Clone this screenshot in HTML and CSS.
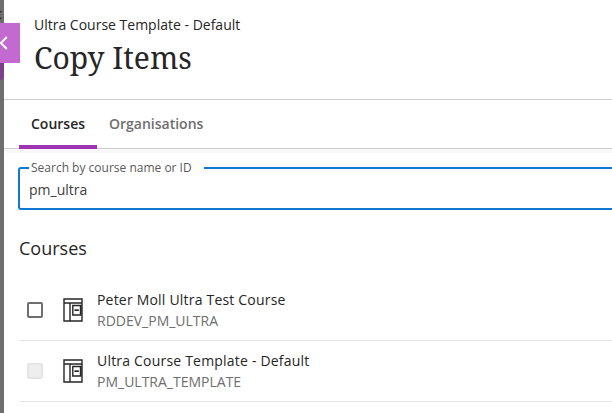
FILE: index.html
```html
<!DOCTYPE html>
<html lang="en">
<head>
<meta charset="utf-8">
<title>Copy Items</title>
<link rel="stylesheet" href="styles.css">
</head>
<body>
<aside class="backdrop">
  <span class="backdrop-letter">c</span>
  <span class="backdrop-accent"></span>
</aside>
<button class="close-tab" aria-label="Close">
  <svg width="8" height="14" viewBox="0 0 8 14"><path d="M6.800 1 L0.800 7 L6.800 13" fill="none" stroke="#fff" stroke-width="2"/></svg>
</button>
<main class="panel">
  <header class="head">
    <div class="crumb">Ultra Course Template - Default</div>
    <h1 class="title">Copy Items</h1>
  </header>
  <nav class="tabs">
    <a class="tab active">Courses</a>
    <a class="tab">Organisations</a>
  </nav>
  <section class="content">
    <fieldset class="search">
      <legend class="search-label">Search by course name or ID</legend>
      <div class="search-value">pm_ultra</div>
    </fieldset>
    <h2 class="section-title">Courses</h2>
    <ul class="list">
      <li class="row">
        <span class="check"></span>
        <svg class="icon" width="20" height="24" viewBox="0 0 20 24"><path d="M1 1 H19 V23 H1 Z M1 5 H19 M7 5 V23 M9.800 7.500 H17.500 V17 H9.800 Z" fill="none" stroke="#262626" stroke-width="1.400"/><path d="M11.500 11.300 H15.800 V13 H11.500 Z" fill="#262626"/></svg>
        <div class="info">
          <div class="name">Peter Moll Ultra Test Course</div>
          <div class="code">RDDEV_PM_ULTRA</div>
        </div>
      </li>
      <li class="row">
        <span class="check disabled"></span>
        <svg class="icon" width="20" height="24" viewBox="0 0 20 24"><path d="M1 1 H19 V23 H1 Z M1 5 H19 M7 5 V23 M9.800 7.500 H17.500 V17 H9.800 Z" fill="none" stroke="#262626" stroke-width="1.400"/><path d="M11.500 11.300 H15.800 V13 H11.500 Z" fill="#262626"/></svg>
        <div class="info">
          <div class="name">Ultra Course Template - Default</div>
          <div class="code">PM_ULTRA_TEMPLATE</div>
        </div>
      </li>
    </ul>
  </section>
</main>
</body>
</html>
```
FILE: styles.css
```css
* { box-sizing: border-box; }
html, body { margin: 0; height: 100%; }
body {
  width: 612px;
  height: 413px;
  overflow: hidden;
  display: flex;
  position: relative;
  background: #fff;
  font-family: "Open Sans", "Noto Sans", sans-serif;
  color: #262626;
}
.backdrop {
  width: 4px;
  flex: none;
  background: #6e6e6e;
  position: relative;
  overflow: hidden;
}
.backdrop-letter {
  position: absolute;
  left: -5px;
  top: 4px;
  font-size: 14px;
  line-height: 20px;
  color: #111;
}
.backdrop-accent {
  position: absolute;
  left: 0;
  top: 63px;
  width: 4px;
  height: 17px;
  background: #7d3f8c;
  border-bottom-right-radius: 4px;
}
.close-tab {
  position: absolute;
  left: 0;
  top: 23px;
  width: 20px;
  height: 40px;
  padding: 0;
  border: 0;
  background: #c36ad0;
  display: flex;
  align-items: center;
  justify-content: flex-start;
}
.panel { flex: 1; min-width: 0; display: flex; flex-direction: column; }
.head {
  height: 100px;
  padding: 15px 0 0 31px;
  border-bottom: 1px solid #cdcdcd;
  flex: none;
}
.crumb { font-size: 14px; line-height: 19px; color: #262626; margin-left: -1px; }
.title {
  margin: 4px 0 0 -1px;
  font-family: "Noto Serif", "DejaVu Serif", serif;
  font-weight: 400;
  font-size: 30px;
  line-height: 40px;
  color: #262626;
}
.tabs {
  height: 49px;
  flex: none;
  display: flex;
  gap: 12px;
  padding-left: 15px;
  border-bottom: 1px solid #cdcdcd;
}
.tab {
  width: 78px;
  text-align: center;
  font-size: 14px;
  font-weight: 600;
  line-height: 47px;
  color: #6e6e6e;
  margin-bottom: -1px;
}
.tab:last-child { width: auto; }
.tab.active { color: #262626; border-bottom: 4px solid #a032b4; }
.content { flex: 1; background: #fff; padding: 0 0 0 15px; overflow: hidden; box-shadow: inset 0 4px 0 #f8f8f8; }
.search {
  margin: 12px -4px 0 -1px;
  padding: 0 0 0 9px;
  height: 49px;
  border: 2px solid #0f78d2;
  border-radius: 3px;
  min-width: 0;
}
.search-label {
  margin-left: 0;
  padding: 0 12px 0 2px;
  font-size: 12px;
  line-height: 14px;
  color: #5a5a5a;
}
.search-value { font-size: 14px; line-height: 20px; margin-top: 5px; color: #404040; }
.section-title {
  margin: 26px 0 0;
  font-size: 18px;
  font-weight: 500;
  line-height: 24px;
  color: #262626;
}
.list { list-style: none; margin: 20px 0 0; padding: 0; }
.row {
  height: 61px;
  display: flex;
  align-items: center;
  border-bottom: 1px solid #e5e5e5;
}
.check {
  width: 16px;
  height: 16px;
  margin-left: 8px;
  border: 2px solid #6e6e6e;
  border-radius: 2px;
  flex: none;
}
.check.disabled { background: #eeeeee; border-color: #e5e5e5; }
.icon { margin-left: 20px; flex: none; }
.info { margin-left: 14px; }
.name { font-size: 14px; font-weight: 500; letter-spacing: 0.2px; line-height: 19px; color: #262626; }
.code { font-size: 14px; line-height: 19px; margin-top: 2px; color: #6e6e6e; }
```
